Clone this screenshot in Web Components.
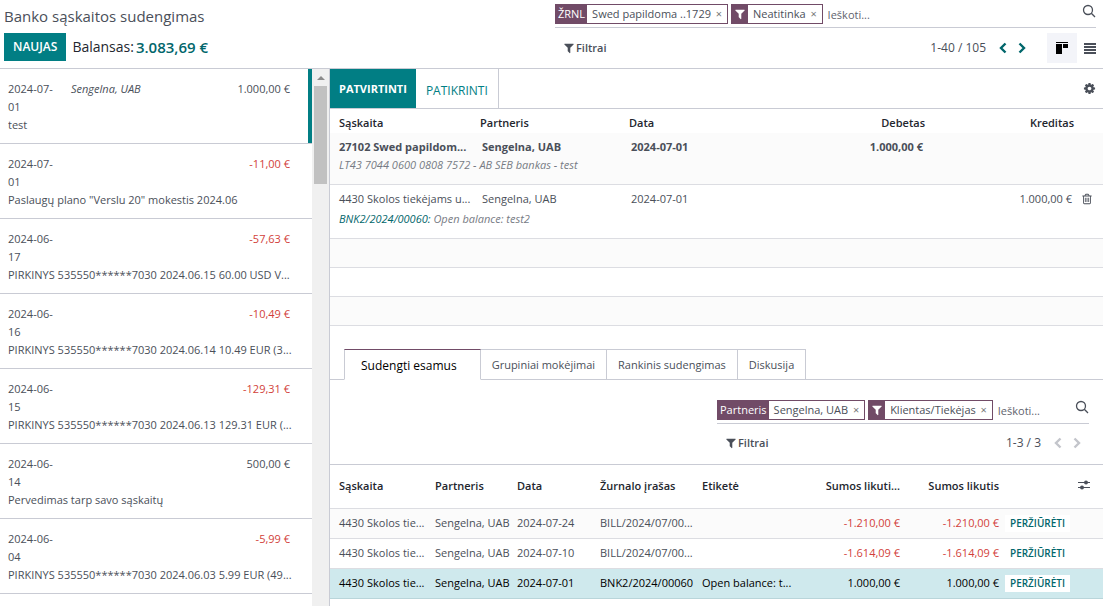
<!DOCTYPE html>
<html lang="lt">
<head>
<meta charset="utf-8">
<title>Banko sąskaitos sudengimas</title>
<style>
  body { margin: 0; background: #fff; color: #4a4f59; font: 11px/18px "Open Sans", "Noto Sans", sans-serif; }
</style>
</head>
<body>
<reconcile-app></reconcile-app>

<script>
const RESET = `
  *, *::before, *::after { box-sizing: border-box; }
  button, input { font: inherit; color: inherit; margin: 0; padding: 0; border: 0; border-radius: 0; background: none; }
  a { color: #01666b; text-decoration: none; }
`;
function define(name, markup, setup) {
  const template = document.createElement('template');
  template.innerHTML = markup;
  customElements.define(name, class extends HTMLElement {
    constructor() {
      super();
      this.attachShadow({ mode: 'open' }).append(template.content.cloneNode(true));
    }
    connectedCallback() { if (setup) setup(this, this.shadowRoot); }
  });
}

/* Icons */
const ICONS = {
  filter: ['0 0 1792 1792', '<path fill="currentColor" d="M1595 295q17 41-14 70l-493 493v742q0 42-39 59-13 5-25 5-27 0-45-19l-256-256q-19-19-19-45v-486l-493-493q-31-29-14-70 17-39 59-39h1280q42 0 59 39z"/>'],
  cog: ['0 0 1792 1792', '<path fill="currentColor" d="M1152 896q0-106-75-181t-181-75-181 75-75 181 75 181 181 75 181-75 75-181zm512-109v222q0 12-8 23t-20 13l-185 28q-19 54-39 91 35 50 107 138 10 12 10 25t-9 23q-27 37-99 108t-94 71q-12 0-26-9l-138-108q-44 23-91 38-16 136-29 186-7 28-36 28h-222q-14 0-24.500-8.500t-11.500-21.500l-28-184q-49-16-90-37l-141 107q-10 9-25 9-14 0-25-11-126-114-165-168-7-10-7-23 0-12 8-23 15-21 51-66.500t54-70.500q-27-50-41-99l-183-27q-13-2-21-12.500t-8-23.500v-222q0-12 8-23t19-13l186-28q14-46 39-92-40-57-107-138-10-12-10-24 0-10 9-23 26-36 98.500-107.500t94.500-71.500q13 0 26 10l138 107q44-23 91-38 16-136 29-186 7-28 36-28h222q14 0 24.500 8.500t11.500 21.500l28 184q49 16 90 37l142-107q9-9 24-9 13 0 25 10 129 119 165 170 7 8 7 22 0 12-8 23-15 21-51 66.500t-54 70.500q26 50 41 98l183 28q13 2 21 12.500t8 23.500z"/>'],
  trash: ['0 0 1792 1792', '<path fill="currentColor" d="M704 736v576q0 14-9 23t-23 9h-64q-14 0-23-9t-9-23v-576q0-14 9-23t23-9h64q14 0 23 9t9 23zm256 0v576q0 14-9 23t-23 9h-64q-14 0-23-9t-9-23v-576q0-14 9-23t23-9h64q14 0 23 9t9 23zm256 0v576q0 14-9 23t-23 9h-64q-14 0-23-9t-9-23v-576q0-14 9-23t23-9h64q14 0 23 9t9 23zm128 724v-948h-896v948q0 22 7 40.500t14.500 27 10.500 8.500h832q3 0 10.500-8.500t14.500-27 7-40.500zm-672-1076h448l-48-117q-7-9-17-11h-317q-10 2-17 11zm928 32v64q0 14-9 23t-23 9h-96v948q0 83-47 143.500t-113 60.500h-832q-66 0-113-58.500t-47-141.500v-952h-96q-14 0-23-9t-9-23v-64q0-14 9-23t23-9h309l70-167q15-37 54-63t79-26h320q40 0 79 26t54 63l70 167h309q14 0 23 9t9 23z"/>'],
  search: ['0 0 14 14', '<g fill="none" stroke="currentColor" stroke-width="1.3"><circle cx="6" cy="6" r="4.500"/><path d="M9.300 9.300 13 13"/></g>'],
  prev: ['0 0 14 14', '<path fill="none" stroke="currentColor" stroke-width="2.400" d="M9.500 2.500 5 7l4.500 4.500"/>'],
  next: ['0 0 14 14', '<path fill="none" stroke="currentColor" stroke-width="2.400" d="M4.500 2.500 9 7l-4.500 4.500"/>'],
  kanban: ['0 0 14 14', '<path fill="#000" d="M1 1h12v1H1zM1 3h6v10H1zM8 3h5v4H8z"/>'],
  list: ['0 0 12 12', '<path fill="currentColor" d="M0 1h12v2H0zM0 4h12v2H0zM0 7h12v2H0zM0 10h12v2H0z"/>'],
  sliders: ['0 0 14 14', '<g fill="currentColor"><path d="M1 4h12v1H1zM1 9h12v1H1z"/><circle cx="9" cy="4.500" r="2"/><circle cx="5" cy="9.500" r="2"/></g>'],
  up: ['0 0 8 8', '<path fill="currentColor" d="M0 6 4 2l4 4z"/>']
};
define('ui-icon', `<style>:host{display:inline-block;width:14px;height:14px;flex:none}svg{display:block;width:100%;height:100%}</style><svg aria-hidden="true"></svg>`, (host, root) => {
  const [box, body] = ICONS[host.getAttribute('name')];
  const svg = root.querySelector('svg');
  svg.setAttribute('viewBox', box);
  svg.innerHTML = body;
});

/* Active search facet: slotted label and value with a remove button */
define('search-facet', `<style>${RESET}
  :host { display: flex; flex: none; height: 20px; border: 1px solid #714b67; line-height: 18px; white-space: nowrap; }
  .label { display: flex; align-items: center; padding: 0 2px; background: #714b67; color: #fff; font-weight: 500; }
  .value { padding: 0 4px 0 5px; }
  button { width: 12px; padding-right: 4px; color: #777; line-height: 16px; }
  ::slotted(ui-icon) { width: 12px; height: 12px; }
</style>
<span class="label"><slot name="label"></slot></span><span class="value"><slot></slot></span><button type="button" aria-label="Pašalinti">×</button>`);

define('search-bar', `<style>${RESET}
  :host { display: flex; align-items: flex-start; gap: 3px; height: 24px; padding-bottom: 3px; border-bottom: 1px solid #c9cbd4; }
  input { flex: 1; min-width: 0; height: 20px; padding-left: 2px; outline: 0; }
  input::placeholder { color: #5f636d; opacity: 1; }
  button { display: flex; }
</style>
<slot></slot><input type="search" aria-label="Ieškoti" placeholder="Ieškoti..."><button type="button" aria-label="Ieškoti"><ui-icon name="search"></ui-icon></button>`);

define('filter-button', `<style>${RESET}
  :host { display: block; }
  button { display: flex; align-items: center; gap: 1px; font-weight: 600; line-height: 18px; }
  ui-icon { width: 12px; height: 12px; }
</style><button type="button"><ui-icon name="filter"></ui-icon><slot></slot></button>`);

define('page-pager', `<style>${RESET}
  :host { display: flex; align-items: center; color: #4a4f59; }
  span { margin-right: 7px; font-size: 12px; }
  button { display: flex; width: 19px; height: 18px; align-items: center; justify-content: center; color: #01666b; }
  button:disabled { color: #c3c5cb; }
</style><span><slot></slot></span><button type="button" aria-label="Ankstesnis"><ui-icon name="prev"></ui-icon></button><button type="button" aria-label="Kitas"><ui-icon name="next"></ui-icon></button>`,
(host, root) => root.querySelectorAll('button').forEach(b => b.disabled = host.hasAttribute('single')));

/* Top control panel */
define('control-panel', `<style>${RESET}
  :host { display: grid; grid-template-columns: minmax(0, 1fr) minmax(0, 1fr); column-gap: 10px; padding: 4px 7px 0 4px; height: 69px; border-bottom: 1px solid #c9cbd4; }
  h1 { margin: 0; font-size: 15px; line-height: 24px; font-weight: 400; }
  .actions { display: flex; align-items: center; height: 28px; margin-top: 5px; }
  .new { height: 28px; padding: 0 9px; background: #017e84; color: #fff; font-size: 12px; font-weight: 600; }
  .label { margin-left: 6px; font-size: 14px; color: #23262e; }
  .total { margin-left: 2px; font-size: 15px; font-weight: 600; color: #01666b; }
  .tools { display: flex; align-items: center; height: 30px; margin-top: 5px; }
  filter-button { margin-left: 8px; flex: 1; }
  .views { display: flex; margin-left: 16px; }
  .views button { display: flex; width: 30px; height: 30px; align-items: center; justify-content: center; }
  .views button[aria-pressed=true] { background: #f3f4f9; }
  .views .list { width: 19px; justify-content: flex-end; }
  .list ui-icon { width: 12px; height: 12px; }
</style>
<div>
  <h1>Banko sąskaitos sudengimas</h1>
  <div class="actions"><button class="new" type="button">NAUJAS</button><span class="label">Balansas:</span><a class="total" href="#">3.083,69 €</a></div>
</div>
<div>
  <search-bar>
    <search-facet><span slot="label">ŽRNL</span>Swed papildoma ..1729</search-facet>
    <search-facet><ui-icon slot="label" name="filter"></ui-icon>Neatitinka</search-facet>
  </search-bar>
  <div class="tools">
    <filter-button>Filtrai</filter-button>
    <page-pager>1-40 / 105</page-pager>
    <div class="views">
      <button type="button" aria-label="Kanban" aria-pressed="true"><ui-icon name="kanban"></ui-icon></button>
      <button type="button" aria-label="Sąrašas" class="list"><ui-icon name="list"></ui-icon></button>
    </div>
  </div>
</div>`);

/* One bank statement line */
define('statement-line', `<style>${RESET}
  :host { display: block; padding: 11px 22px 9px 8px; border-bottom: 1px solid #c9cbd4; }
  :host([selected]) { box-shadow: inset -4px 0 #017e84; }
  :host([negative]) .amount { color: #d23f3a; }
  .top { display: grid; grid-template-columns: 51px 1fr auto; column-gap: 12px; }
  .date, .amount { font-weight: 500; }
  .partner { font-style: italic; }
  .memo { margin-right: -12px; white-space: nowrap; overflow: hidden; }
</style>
<div class="top"><div class="date"><slot name="date"></slot></div><div class="partner"><slot name="partner"></slot></div><div class="amount"><slot name="amount"></slot></div></div>
<div class="memo"><slot></slot></div>`);

define('scroll-rail', `<style>${RESET}
  :host { display: flex; flex-direction: column; align-items: center; width: 17px; background: #f0f0f0; color: #8b8b8b; }
  ui-icon { width: 8px; height: 8px; margin: 5px 0 4px; }
  div { width: 13px; height: 98px; background: #c1c1c1; }
</style><ui-icon name="up"></ui-icon><div></div>`);

define('statement-list', `<style>${RESET}
  :host { display: grid; grid-template-columns: 1fr auto; overflow: hidden; }
  .lines { min-width: 0; }
</style><div class="lines"><slot></slot></div><scroll-rail></scroll-rail>`);

/* Journal items of the selected line */
define('entry-table', `<style>${RESET}
  :host { display: block; }
  table { width: 100%; border-collapse: collapse; table-layout: fixed; }
  th { height: 24px; padding: 5px 4px 1px; text-align: left; font-weight: 600; color: #23262e; }
  td { padding: 5px 6px 0; vertical-align: top; white-space: nowrap; height: 23px; }
  th:first-child, td:first-child { padding-left: 9px; }
  .num { text-align: right; }
  .note td { height: 28px; padding-top: 0; font-style: italic; color: #777b84; }
  .item .note td { height: 31px; padding-top: 2px; }
  tbody { border-bottom: 1px solid #dcdde2; }
  .bank { background: #fbfbfb; }
  .bank tr:first-child { font-weight: 700; }
  .blank td { height: 29px; padding: 0; }
  .shade { background: #fbfbfb; }
  tr .del { padding-left: 3px; padding-right: 0; }
  button { display: flex; align-items: center; height: 18px; }
  button ui-icon { width: 12px; height: 12px; }
</style>
<table>
  <colgroup><col style="width:146px"><col style="width:149px"><col style="width:149px"><col><col style="width:149px"><col style="width:25px"></colgroup>
  <thead><tr><th>Sąskaita</th><th>Partneris</th><th>Data</th><th class="num">Debetas</th><th class="num">Kreditas</th><th></th></tr></thead>
  <tbody class="bank">
    <tr><td>27102 Swed papildom...</td><td>Sengelna, UAB</td><td>2024-07-01</td><td class="num">1.000,00 €</td><td></td><td></td></tr>
    <tr class="note"><td colspan="6">LT43 7044 0600 0808 7572 - AB SEB bankas - test</td></tr>
  </tbody>
  <tbody class="item">
    <tr><td>4430 Skolos tiekėjams u...</td><td>Sengelna, UAB</td><td>2024-07-01</td><td></td><td class="num">1.000,00 €</td><td class="del"><button type="button" aria-label="Ištrinti"><ui-icon name="trash"></ui-icon></button></td></tr>
    <tr class="note"><td colspan="6"><a href="#">BNK2/2024/00060:</a> Open balance: test2</td></tr>
  </tbody>
  <tbody class="blank shade"><tr><td colspan="6"></td></tr></tbody>
  <tbody class="blank"><tr><td colspan="6"></td></tr></tbody>
  <tbody class="blank shade"><tr><td colspan="6"></td></tr></tbody>
</table>`);

define('tab-strip', `<style>${RESET}
  :host { display: flex; padding-left: 14px; box-shadow: inset 0 -1px #c9cbd4; }
  button { height: 31px; padding: 0 11px; border: 1px solid #c9cbd4; border-left: 0; white-space: nowrap; }
  button[aria-selected=true] { padding: 2px 23px 0 16px; border-left: 1px solid #c9cbd4; border-top-color: #714b67; border-bottom-color: #fff; background: #fff; color: #000; font-size: 12px; }
</style>
<button type="button" role="tab" aria-selected="true">Sudengti esamus</button><button type="button" role="tab">Grupiniai mokėjimai</button><button type="button" role="tab">Rankinis sudengimas</button><button type="button" role="tab">Diskusija</button>`,
host => host.setAttribute('role', 'tablist'));

/* Open items that can be matched */
define('match-table', `<style>${RESET}
  :host { display: block; }
  table { width: 100%; border-collapse: collapse; table-layout: fixed; }
  tr { border-bottom: 1px solid #dcdde2; }
  th, td { padding: 0 4px; text-align: left; white-space: nowrap; }
  th { height: 43px; font-weight: 600; color: #23262e; }
  td { height: 30px; }
  th:first-child, td:first-child { padding-left: 9px; }
  tbody tr:first-child { background: #fbfbfb; }
  tr .num { text-align: right; }
  .neg { color: #d23f3a; }
  tr.picked { background: #cfe9ed; color: #000; border-color: #b9d5da; }
  tr .act { padding: 0 2px; }
  button { display: block; height: 17px; padding: 0 5px; background: #fff; color: #01666b; font-size: 10px; font-weight: 600; line-height: 17px; }
  th button { padding: 0 0 0 1px; color: #4a4f59; }
</style>
<table>
  <colgroup><col style="width:101px"><col style="width:82px"><col style="width:83px"><col style="width:102px"><col><col style="width:102px"><col style="width:99px"><col style="width:71px"><col style="width:29px"></colgroup>
  <thead><tr><th>Sąskaita</th><th>Partneris</th><th>Data</th><th>Žurnalo įrašas</th><th>Etiketė</th><th class="num">Sumos likuti...</th><th class="num">Sumos likutis</th><th></th><th class="act"><button type="button" aria-label="Stulpeliai"><ui-icon name="sliders"></ui-icon></button></th></tr></thead>
  <tbody>
    <tr><td>4430 Skolos tie...</td><td>Sengelna, UAB</td><td>2024-07-24</td><td>BILL/2024/07/00...</td><td></td><td class="num neg">-1.210,00 €</td><td class="num neg">-1.210,00 €</td><td class="act"><button type="button">PERŽIŪRĖTI</button></td><td></td></tr>
    <tr><td>4430 Skolos tie...</td><td>Sengelna, UAB</td><td>2024-07-10</td><td>BILL/2024/07/00...</td><td></td><td class="num neg">-1.614,09 €</td><td class="num neg">-1.614,09 €</td><td class="act"><button type="button">PERŽIŪRĖTI</button></td><td></td></tr>
    <tr class="picked"><td>4430 Skolos tie...</td><td>Sengelna, UAB</td><td>2024-07-01</td><td>BNK2/2024/00060</td><td>Open balance: t...</td><td class="num">1.000,00 €</td><td class="num">1.000,00 €</td><td class="act"><button type="button">PERŽIŪRĖTI</button></td><td></td></tr>
  </tbody>
</table>`);

define('match-search', `<style>${RESET}
  :host { display: grid; grid-template-columns: minmax(0, 1fr) minmax(0, 1fr); column-gap: 15px; padding: 20px 14px 0 0; height: 85px; border-bottom: 1px solid #c9cbd4; }
  .box { grid-column: 2; }
  .tools { display: flex; align-items: center; justify-content: space-between; margin-top: 10px; padding: 0 3px 0 8px; }
</style>
<div class="box">
  <search-bar>
    <search-facet><span slot="label">Partneris</span>Sengelna, UAB</search-facet>
    <search-facet><ui-icon slot="label" name="filter"></ui-icon>Klientas/Tiekėjas</search-facet>
  </search-bar>
  <div class="tools"><filter-button>Filtrai</filter-button><page-pager single>1-3 / 3</page-pager></div>
</div>`);

define('reconcile-panel', `<style>${RESET}
  :host { display: block; min-width: 0; border-left: 1px solid #c9cbd4; }
  .bar { display: flex; height: 40px; border-bottom: 1px solid #c9cbd4; }
  .validate { padding: 0 9px; background: #017e84; color: #fff; font-weight: 700; }
  .check { padding: 4px 10px 0 10px; border-right: 1px solid #c9cbd4; color: #017e84; font-size: 12px; }
  .cog { margin-left: auto; padding-right: 7px; display: flex; align-items: center; }
  .cog ui-icon { width: 13px; height: 13px; }
  tab-strip { margin-top: 23px; }
</style>
<div class="bar"><button class="validate" type="button">PATVIRTINTI</button><button class="check" type="button">PATIKRINTI</button><button class="cog" type="button" aria-label="Nustatymai"><ui-icon name="cog"></ui-icon></button></div>
<entry-table></entry-table>
<tab-strip></tab-strip>
<match-search></match-search>
<match-table></match-table>`);

define('reconcile-app', `<style>${RESET}
  :host { display: flex; flex-direction: column; height: 100vh; overflow: hidden; }
  main { flex: 1; min-height: 0; display: grid; grid-template-columns: 329px minmax(0, 1fr); }
</style>
<control-panel></control-panel>
<main>
  <statement-list>
    <statement-line selected><span slot="date">2024-07-01</span><span slot="partner">Sengelna, UAB</span><span slot="amount">1.000,00 €</span>test</statement-line>
    <statement-line negative><span slot="date">2024-07-01</span><span slot="amount">-11,00 €</span>Paslaugų plano "Verslu 20" mokestis 2024.06</statement-line>
    <statement-line negative><span slot="date">2024-06-17</span><span slot="amount">-57,63 €</span>PIRKINYS 535550******7030 2024.06.15 60.00 USD V...</statement-line>
    <statement-line negative><span slot="date">2024-06-16</span><span slot="amount">-10,49 €</span>PIRKINYS 535550******7030 2024.06.14 10.49 EUR (3...</statement-line>
    <statement-line negative><span slot="date">2024-06-15</span><span slot="amount">-129,31 €</span>PIRKINYS 535550******7030 2024.06.13 129.31 EUR (...</statement-line>
    <statement-line><span slot="date">2024-06-14</span><span slot="amount">500,00 €</span>Pervedimas tarp savo sąskaitų</statement-line>
    <statement-line negative><span slot="date">2024-06-04</span><span slot="amount">-5,99 €</span>PIRKINYS 535550******7030 2024.06.03 5.99 EUR (49...</statement-line>
  </statement-list>
  <reconcile-panel></reconcile-panel>
</main>`);
</script>
</body>
</html>
